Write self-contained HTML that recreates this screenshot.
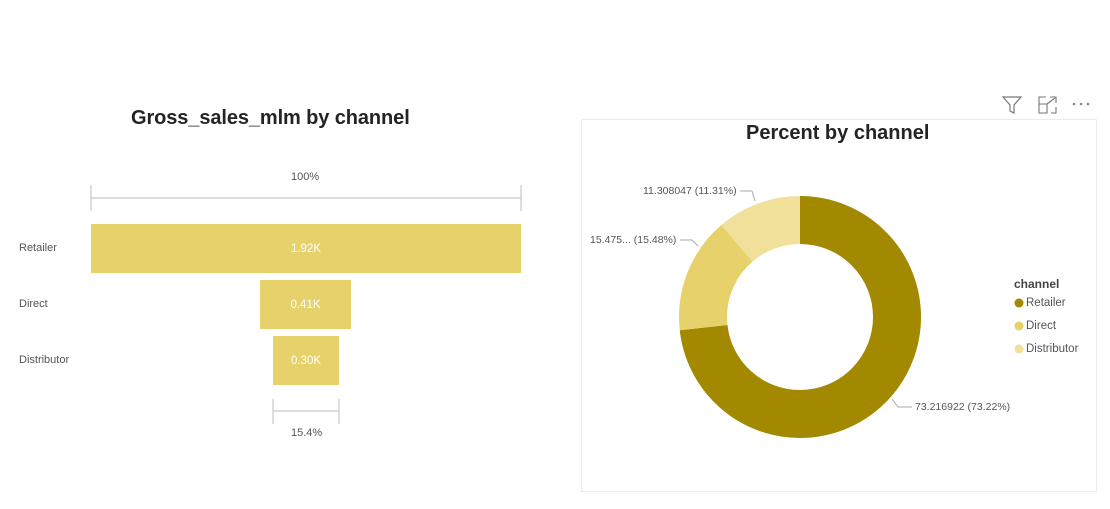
<!DOCTYPE html>
<html><head><style>
body{margin:0;width:1110px;height:509px;background:#fff;position:relative;font-family:"Liberation Sans",sans-serif;overflow:hidden}
.t{position:absolute;white-space:nowrap}
.title{font-weight:bold;font-size:20px;color:#252423}
.lbl{font-size:11px;color:#555}
.bar{position:absolute;background:#E7D16A;color:#fff;font-size:11.5px;display:flex;align-items:center;justify-content:center}
</style></head><body>
<div class="t title" style="left:131px;top:107px;letter-spacing:-0.1px">Gross_sales_mlm by channel</div>
<div class="t lbl" style="left:291px;top:171px">100%</div>
<svg width="1110" height="509" style="position:absolute;left:0;top:0">
<g stroke="#c8c8c8" stroke-width="1.2" fill="none">
<line x1="91" y1="185" x2="91" y2="211"/><line x1="521" y1="185" x2="521" y2="211"/><line x1="91" y1="198" x2="521" y2="198"/>
<line x1="273" y1="399" x2="273" y2="424"/><line x1="339" y1="399" x2="339" y2="424"/><line x1="273" y1="411" x2="339" y2="411"/>
</g>
<rect x="581.5" y="119.5" width="515" height="372" fill="none" stroke="#ebebeb"/>
<g transform="translate(800,317) rotate(-90)" fill="none" stroke-width="48">
<circle r="97" stroke="#A38900" stroke-dasharray="446.25 609.47"/>
<circle r="97" stroke="#E7D16A" stroke-dasharray="0 446.25 94.35 609.47"/>
<circle r="97" stroke="#F0E09A" stroke-dasharray="0 540.6 68.9 609.47"/>
</g>
<g stroke="#aaa" stroke-width="1" fill="none">
<polyline points="740,191 752,191 755,201"/>
<polyline points="680,240 692,240 698,246"/>
<polyline points="892,399 898,407 912,407"/>
</g>
<g fill="#888"><circle cx="1074" cy="104" r="1.3"/><circle cx="1081" cy="104" r="1.3"/><circle cx="1088" cy="104" r="1.3"/></g>
<path d="M1003,97 H1021 L1014,105 V113 L1010,111 V105 Z" fill="none" stroke="#777" stroke-width="1.2"/>
<path d="M1039,104 V113 H1047 V104 H1039 V97 H1046 M1050,97 H1056 V103 M1056,107 V113 H1051 M1047,104 L1055,98" fill="none" stroke="#777" stroke-width="1.1"/>
<circle cx="1019" cy="303" r="4.5" fill="#A38900"/>
<circle cx="1019" cy="326" r="4.5" fill="#E7D16A"/>
<circle cx="1019" cy="349" r="4.5" fill="#F0E09A"/>
</svg>
<div class="bar" style="left:91px;top:224px;width:430px;height:49px">1.92K</div>
<div class="bar" style="left:260px;top:280px;width:91px;height:49px">0.41K</div>
<div class="bar" style="left:273px;top:336px;width:66px;height:49px">0.30K</div>
<div class="t lbl" style="left:19px;top:242px">Retailer</div>
<div class="t lbl" style="left:19px;top:298px">Direct</div>
<div class="t lbl" style="left:19px;top:354px">Distributor</div>
<div class="t lbl" style="left:291px;top:427px">15.4%</div>
<div class="t title" style="left:746px;top:122px">Percent by channel</div>
<div class="t lbl" style="left:643px;top:185px;font-size:10.5px">11.308047 (11.31%)</div>
<div class="t lbl" style="left:590px;top:234px;font-size:10.5px">15.475... (15.48%)</div>
<div class="t lbl" style="left:915px;top:401px;font-size:10.5px">73.216922 (73.22%)</div>
<div class="t" style="left:1014px;top:277px;font-size:12px;font-weight:bold;color:#444">channel</div>
<div class="t lbl" style="left:1026px;top:297px;font-size:11.5px">Retailer</div>
<div class="t lbl" style="left:1026px;top:320px;font-size:11.5px">Direct</div>
<div class="t lbl" style="left:1026px;top:343px;font-size:11.5px">Distributor</div>
</body></html>
